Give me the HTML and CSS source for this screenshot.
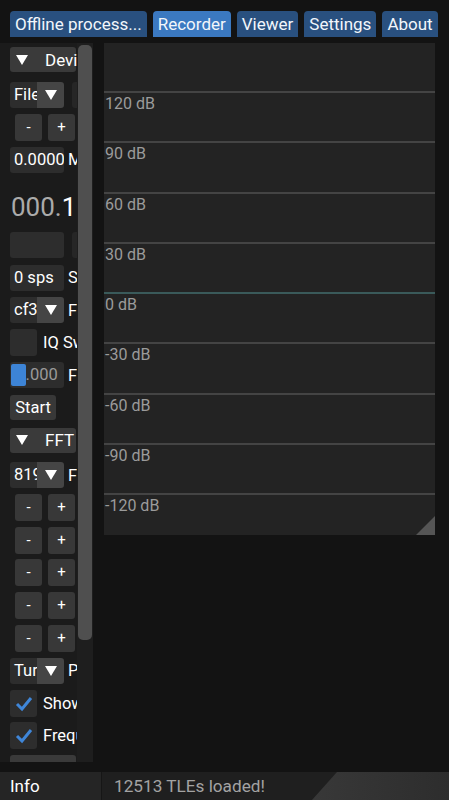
FILE: index.html
```html
<!DOCTYPE html>
<html lang="en">
<head>
  <meta charset="UTF-8" />
  <title>Recorder</title>
  <link rel="stylesheet" href="styles.css">
</head>
<body>

<nav class="tabs">
  <span class="tab">Offline process...</span>
  <span class="tab active">Recorder</span>
  <span class="tab">Viewer</span>
  <span class="tab">Settings</span>
  <span class="tab">About</span>
</nav>

<div class="main">
  <aside class="side">
    <div class="side-inner">
      <div class="header"><svg class="tri" viewBox="0 0 12 10"><polygon points="0,0 12,0 6,10" /></svg><span>Device</span></div>

      <div class="row">
        <div class="combo"><span class="combo-text">File</span><span class="combo-btn"><svg class="tri" viewBox="0 0 12 10"><polygon points="0,0 12,0 6,10" /></svg></span></div>
        <div class="frame next"></div>
      </div>
      <div class="row pm"><span class="btn">-</span><span class="btn">+</span></div>
      <div class="row"><div class="frame">0.0000000</div><span class="lbl">MHz</span></div>

      <div class="freq"><span class="dim">000.</span>100.000.000</div>

      <div class="row"><div class="frame"></div><div class="frame next"></div></div>
      <div class="row"><div class="frame">0 sps</div><span class="lbl">Samplerate</span></div>
      <div class="row">
        <div class="combo"><span class="combo-text">cf32</span><span class="combo-btn"><svg class="tri" viewBox="0 0 12 10"><polygon points="0,0 12,0 6,10" /></svg></span></div>
        <span class="lbl">Format</span>
      </div>
      <div class="row"><span class="check"></span><span class="lbl">IQ Swap</span></div>
      <div class="row"><div class="frame slider"><span class="grab"></span>0.000</div><span class="lbl">Frequency</span></div>
      <div class="row"><span class="btn start">Start</span></div>

      <div class="header"><svg class="tri" viewBox="0 0 12 10"><polygon points="0,0 12,0 6,10" /></svg><span>FFT</span></div>

      <div class="row">
        <div class="combo"><span class="combo-text">8192</span><span class="combo-btn"><svg class="tri" viewBox="0 0 12 10"><polygon points="0,0 12,0 6,10" /></svg></span></div>
        <span class="lbl">FFT Size</span>
      </div>
      <div class="row pm"><span class="btn">-</span><span class="btn">+</span></div>
      <div class="row pm"><span class="btn">-</span><span class="btn">+</span></div>
      <div class="row pm"><span class="btn">-</span><span class="btn">+</span></div>
      <div class="row pm"><span class="btn">-</span><span class="btn">+</span></div>
      <div class="row pm"><span class="btn">-</span><span class="btn">+</span></div>
      <div class="row">
        <div class="combo"><span class="combo-text">Turbo</span><span class="combo-btn"><svg class="tri" viewBox="0 0 12 10"><polygon points="0,0 12,0 6,10" /></svg></span></div>
        <span class="lbl">Palette</span>
      </div>
      <div class="row"><span class="check"><svg viewBox="0 0 27 27"><polyline points="7,14 12,19 21,8" /></svg></span><span class="lbl">Show Waterfall</span></div>
      <div class="row"><span class="check"><svg viewBox="0 0 27 27"><polyline points="7,14 12,19 21,8" /></svg></span><span class="lbl">Frequency Scale</span></div>

      <div class="header"><svg class="tri" viewBox="0 0 12 10"><polygon points="0,0 10,5 0,10" /></svg><span>Display</span></div>
    </div>
    <div class="scroll"><div class="thumb"></div></div>
  </aside>

  <section class="plot">
    <div class="gl">120 dB</div>
    <div class="gl">90 dB</div>
    <div class="gl">60 dB</div>
    <div class="gl">30 dB</div>
    <div class="gl zero">0 dB</div>
    <div class="gl">-30 dB</div>
    <div class="gl">-60 dB</div>
    <div class="gl">-90 dB</div>
    <div class="gl">-120 dB</div>
    <span class="grip"></span>
  </section>
</div>

<footer class="status">
  <span class="info">Info</span>
  <span class="msg">12513 TLEs loaded!</span>
</footer>

</body>
</html>
```

FILE: styles.css
```css
body {
  margin: 0;
  width: 449px;
  height: 800px;
  overflow: hidden;
  background: #131313;
  color: #fff;
  font-family: Roboto, 'Liberation Sans', sans-serif;
  font-size: 16.5px;
}
.tabs {
  display: flex;
  gap: 6px;
  height: 26px;
  padding: 11px 0 0 10px;
}
.tab {
  height: 26px;
  line-height: 26px;
  padding: 0 5px;
  background: #29507f;
  border-radius: 4px 4px 0 0;
  font-size: 17px;
  color: #f2f6fb;
  white-space: nowrap;
}
.tab.active {
  background: #3b79c1;
}
.main {
  display: flex;
  height: 719px;
  margin-top: 6px;
}
.side {
  width: 93px;
  display: flex;
  flex-shrink: 0;
  background: #1b1b1b;
}
.side-inner {
  width: 77px;
  overflow: hidden;
  padding: 4px 0 0 10px;
  box-sizing: border-box;
  display: flex;
  flex-direction: column;
  gap: 6.6px;
}
.header {
  flex-shrink: 0;
  width: 66px;
  height: 25px;
  margin-bottom: 3px;
  display: flex;
  align-items: center;
  gap: 17px;
  padding-left: 6px;
  box-sizing: border-box;
  background: #3a3a3a;
  border-radius: 3px;
  white-space: nowrap;
  font-size: 17px;
}
.tri {
  width: 12px;
  height: 10px;
  flex-shrink: 0;
  fill: #fff;
}
.row {
  flex-shrink: 0;
  height: 26px;
  display: flex;
  align-items: center;
  gap: 4px;
  white-space: nowrap;
}
.frame {
  flex-shrink: 0;
  width: 54px;
  height: 26px;
  line-height: 26px;
  padding-left: 4px;
  box-sizing: border-box;
  background: #2d2d2d;
  border-radius: 3px;
  overflow: hidden;
  white-space: nowrap;
}
.frame.next {
  margin-left: 4px;
  background: #262626;
}
.lbl {
  flex-shrink: 0;
}
.combo {
  flex-shrink: 0;
  width: 54px;
  height: 26px;
  display: flex;
  border-radius: 3px;
  overflow: hidden;
}
.combo-text {
  width: 27px;
  padding-left: 4px;
  box-sizing: border-box;
  line-height: 26px;
  background: #2d2d2d;
  overflow: hidden;
}
.combo-btn {
  width: 27px;
  display: flex;
  align-items: center;
  justify-content: center;
  background: #454545;
}
.pm {
  padding-left: 5px;
  gap: 6px;
}
.btn {
  flex-shrink: 0;
  width: 27px;
  height: 27px;
  line-height: 26px;
  text-align: center;
  background: #383838;
  border-radius: 3px;
  font-size: 15px;
}
.btn.start {
  width: 46px;
  height: 25px;
  line-height: 25px;
  font-size: 16.5px;
}
.freq {
  flex-shrink: 0;
  height: 46px;
  box-sizing: border-box;
  padding: 11px 0 0 1px;
  line-height: 34px;
  font-size: 26px;
  white-space: nowrap;
  color: #fff;
}
.freq .dim {
  color: #ababab;
}
.check {
  flex-shrink: 0;
  width: 27px;
  height: 27px;
  background: #2d2d2d;
  border-radius: 3px;
  margin-right: 2px;
}
.check svg {
  width: 27px;
  height: 27px;
  fill: none;
  stroke: #3f86d8;
  stroke-width: 3;
}
.slider {
  position: relative;
  text-align: center;
  padding: 0;
  color: #9a9a9a;
}
.grab {
  position: absolute;
  left: 1px;
  top: 2px;
  width: 15px;
  height: 22px;
  background: #3d84d6;
  border-radius: 2px;
}
.scroll {
  width: 16px;
  background: #1e1e1e;
  padding: 2px 1px 0;
  box-sizing: border-box;
}
.thumb {
  height: 595px;
  background: #4f4f4f;
  border-radius: 5px;
}
.plot {
  position: relative;
  width: 331px;
  height: 492px;
  margin-left: 11px;
  padding-top: 48px;
  box-sizing: border-box;
  background: #232323;
}
.gl {
  height: 50.25px;
  box-sizing: border-box;
  border-top: 2px solid #444;
  padding-left: 1px;
  font-size: 16px;
  line-height: 21px;
  color: #9b9b9b;
}
.gl.zero {
  border-top-color: #3a5a5a;
}
.grip {
  position: absolute;
  right: 0;
  bottom: 0;
  width: 19px;
  height: 19px;
  background: #555;
  clip-path: polygon(100% 0, 100% 100%, 0 100%);
}
.status {
  position: relative;
  display: flex;
  height: 28px;
  margin-top: 10px;
  background: #1f1f1f;
  line-height: 28px;
  overflow: hidden;
}
.status::after {
  content: "";
  position: absolute;
  top: 0;
  bottom: 0;
  left: 312px;
  right: 0;
  background: linear-gradient(90deg, #383838, #2d2d2d);
  clip-path: polygon(25px 0, 100% 0, 100% 100%, 0 100%);
}
.info {
  width: 102px;
  padding-left: 10px;
  box-sizing: border-box;
  background: #252525;
  border-right: 1px solid #161616;
  font-size: 17px;
}
.msg {
  padding-left: 12px;
  color: #a3a3a3;
  font-size: 17.2px;
}
```
